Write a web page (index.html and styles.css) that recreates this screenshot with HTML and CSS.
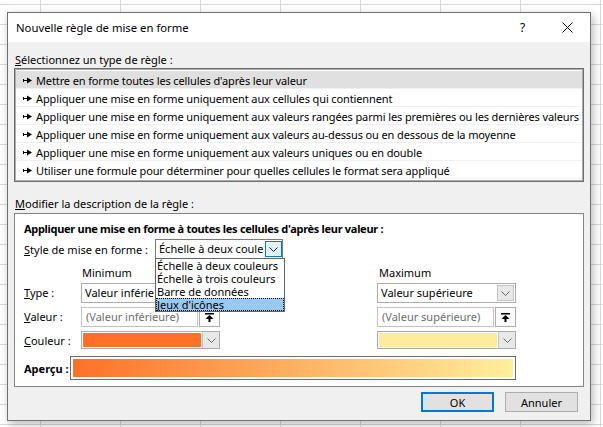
FILE: index.html
```html
<!DOCTYPE html>
<html lang="fr">
<head>
    <meta charset="UTF-8">
    <title>Nouvelle règle de mise en forme</title>
    <link rel="stylesheet" href="styles.css">
</head>
<body>
    <div class="dialog">
        <div class="titlebar">
            <span class="title">Nouvelle règle de mise en forme</span>
            <span class="title-btn">?</span>
            <span class="title-btn">
                <svg width="11" height="11" viewBox="0 0 11 11"><path d="M0.5 0.5 L10.5 10.5 M10.5 0.5 L0.5 10.5" stroke="#000" stroke-width="1"/></svg>
            </span>
        </div>

        <div class="body">
            <div class="section-label"><u>S</u>électionnez un type de règle :</div>
            <ul class="rule-list">
                <li class="selected"><svg class="arrow" width="9" height="7" viewBox="0 0 9 7"><rect x="0" y="2" width="1" height="3"/><rect x="0" y="3" width="5" height="1"/><polygon points="4,0.5 9,3.5 4,6.5"/></svg>Mettre en forme toutes les cellules d'après leur valeur</li>
                <li><svg class="arrow" width="9" height="7" viewBox="0 0 9 7"><rect x="0" y="2" width="1" height="3"/><rect x="0" y="3" width="5" height="1"/><polygon points="4,0.5 9,3.5 4,6.5"/></svg>Appliquer une mise en forme uniquement aux cellules qui contiennent</li>
                <li><svg class="arrow" width="9" height="7" viewBox="0 0 9 7"><rect x="0" y="2" width="1" height="3"/><rect x="0" y="3" width="5" height="1"/><polygon points="4,0.5 9,3.5 4,6.5"/></svg>Appliquer une mise en forme uniquement aux valeurs rangées parmi les premières ou les dernières valeurs</li>
                <li><svg class="arrow" width="9" height="7" viewBox="0 0 9 7"><rect x="0" y="2" width="1" height="3"/><rect x="0" y="3" width="5" height="1"/><polygon points="4,0.5 9,3.5 4,6.5"/></svg>Appliquer une mise en forme uniquement aux valeurs au-dessus ou en dessous de la moyenne</li>
                <li><svg class="arrow" width="9" height="7" viewBox="0 0 9 7"><rect x="0" y="2" width="1" height="3"/><rect x="0" y="3" width="5" height="1"/><polygon points="4,0.5 9,3.5 4,6.5"/></svg>Appliquer une mise en forme uniquement aux valeurs uniques ou en double</li>
                <li><svg class="arrow" width="9" height="7" viewBox="0 0 9 7"><rect x="0" y="2" width="1" height="3"/><rect x="0" y="3" width="5" height="1"/><polygon points="4,0.5 9,3.5 4,6.5"/></svg>Utiliser une formule pour déterminer pour quelles cellules le format sera appliqué</li>
            </ul>

            <div class="section-label second"><u>M</u>odifier la description de la règle :</div>
            <div class="desc">
                <div class="desc-title">Appliquer une mise en forme à toutes les cellules d'après leur valeur :</div>

                <div class="style-row">
                    <label><u>S</u>tyle de mise en forme :</label>
                    <div class="combo style-combo">
                        <span class="combo-text">Échelle à deux coule</span>
                        <span class="combo-btn"><svg width="9" height="5" viewBox="0 0 9 5"><polyline points="0.5,0.5 4.5,4.5 8.5,0.5" fill="none" stroke="#222" stroke-width="1"/></svg></span>
                        <div class="dropdown">
                            <div class="dd-item">Échelle à deux couleurs</div>
                            <div class="dd-item">Échelle à trois couleurs</div>
                            <div class="dd-item">Barre de données</div>
                            <div class="dd-item active">Jeux d'icônes</div>
                        </div>
                    </div>
                </div>

                <div class="limits">
                    <span></span>
                    <span class="col-head">Minimum</span>
                    <span></span>
                    <span class="col-head max">Maximum</span>

                    <label><u>T</u>ype :</label>
                    <div class="combo">
                        <span class="combo-text">Valeur inférie</span>
                        <span class="combo-btn"><svg width="9" height="5" viewBox="0 0 9 5"><polyline points="0.5,0.5 4.5,4.5 8.5,0.5" fill="none" stroke="#666" stroke-width="1"/></svg></span>
                    </div>
                    <span></span>
                    <div class="combo">
                        <span class="combo-text">Valeur supérieure</span>
                        <span class="combo-btn"><svg width="9" height="5" viewBox="0 0 9 5"><polyline points="0.5,0.5 4.5,4.5 8.5,0.5" fill="none" stroke="#666" stroke-width="1"/></svg></span>
                    </div>

                    <label><u>V</u>aleur :</label>
                    <div class="value-field">
                        <span class="value-input">(Valeur inférieure)</span>
                        <span class="ref-btn"><svg width="9" height="9" viewBox="0 0 9 9"><rect x="0" y="0" width="9" height="1.5"/><polygon points="4.5,2 0.5,6 8.5,6"/><rect x="3.5" y="5.5" width="2" height="3.5"/></svg></span>
                    </div>
                    <span></span>
                    <div class="value-field">
                        <span class="value-input">(Valeur supérieure)</span>
                        <span class="ref-btn"><svg width="9" height="9" viewBox="0 0 9 9"><rect x="0" y="0" width="9" height="1.5"/><polygon points="4.5,2 0.5,6 8.5,6"/><rect x="3.5" y="5.5" width="2" height="3.5"/></svg></span>
                    </div>

                    <label><u>C</u>ouleur :</label>
                    <div class="combo color-combo">
                        <span class="swatch min-color"></span>
                        <span class="combo-btn"><svg width="9" height="5" viewBox="0 0 9 5"><polyline points="0.5,0.5 4.5,4.5 8.5,0.5" fill="none" stroke="#666" stroke-width="1"/></svg></span>
                    </div>
                    <span></span>
                    <div class="combo color-combo">
                        <span class="swatch max-color"></span>
                        <span class="combo-btn"><svg width="9" height="5" viewBox="0 0 9 5"><polyline points="0.5,0.5 4.5,4.5 8.5,0.5" fill="none" stroke="#666" stroke-width="1"/></svg></span>
                    </div>
                </div>

                <div class="preview-row">
                    <span class="preview-label">Aperçu :</span>
                    <div class="preview"><div class="gradient"></div></div>
                </div>
            </div>

            <div class="buttons">
                <button type="button" class="ok">OK</button>
                <button type="button">Annuler</button>
            </div>
        </div>
    </div>
</body>
</html>
```

FILE: styles.css
```css
* {
    box-sizing: border-box;
}

html, body {
    margin: 0;
    height: 100%;
    overflow: hidden;
}

/* feuille Excel derriere la boite de dialogue */
body {
    font-family: "Noto Sans", "Segoe UI", sans-serif;
    font-size: 11px;
    color: #000;
    padding: 12px 0 0 7px;
    background-color: #fff;
    background-image:
        linear-gradient(to right, #d9d9d9 1px, transparent 1px),
        linear-gradient(to bottom, #d9d9d9 1px, transparent 1px);
    background-size: 80px 20px;
    background-position: 40px 4px;
}

.dialog {
    width: 584px;
    height: 409px;
    border: 1px solid #707070;
    background-color: #f0f0f0;
    box-shadow: 2px 3px 9px rgba(0,0,0,0.28);
    display: flex;
    flex-direction: column;
}

.titlebar {
    height: 29px;
    background-color: #fff;
    display: flex;
    align-items: center;
    padding-left: 8px;
    font-size: 11.3px;
}

.title {
    flex: 1;
}

.title-btn {
    width: 45px;
    display: flex;
    justify-content: center;
    align-items: center;
    font-size: 12px;
}

.body {
    flex: 1;
    padding: 10px 6px 0;
}

.section-label {
    line-height: 16px;
    padding-left: 1px;
}

.section-label.second {
    margin-top: 14px;
}

/* liste des types de regle */
.rule-list {
    list-style: none;
    margin: 0;
    padding: 2px 1px;
    border: 1px solid #6e6e6e;
    box-shadow: inset 0 0 0 1px #ababab;
    background-color: #fff;
    overflow: hidden;
}

.rule-list li {
    height: 18px;
    display: flex;
    align-items: center;
    padding-left: 7px;
    padding-top: 1px;
    border-bottom: 1px solid #f0f0f0;
    white-space: nowrap;
    letter-spacing: -0.12px;
}

.rule-list li.selected {
    background-color: #e0e0e0;
}

.rule-list .arrow {
    margin-right: 4px;
    flex-shrink: 0;
}

/* description de la regle */
.desc {
    margin-top: 1px;
    height: 174px;
    border: 1px solid #838383;
    background-color: #fff;
    padding: 7px 0 0 9px;
}

.desc-title {
    font-weight: bold;
    line-height: 16px;
    letter-spacing: -0.3px;
}

.style-row {
    display: flex;
    align-items: center;
    height: 20px;
    margin-top: 2px;
}

.style-row label {
    width: 131px;
}

.combo {
    display: flex;
    height: 20px;
    border: 1px solid #adadad;
    background-color: #fff;
}

.combo-text {
    flex: 1;
    padding-left: 3px;
    line-height: 18px;
    overflow: hidden;
    white-space: nowrap;
}

.combo-btn {
    width: 17px;
    margin: 1px;
    border: 1px solid #c4c4c4;
    background-color: #e8e8e8;
    display: flex;
    justify-content: center;
    align-items: center;
}

.style-combo {
    width: 128px;
    border-color: #7a7a7a;
    position: relative;
}

.style-combo .combo-btn {
    margin: 1px 0 1px 1px;
    border-color: #0078d7;
    background-color: #e5f1fb;
}

.dropdown {
    position: absolute;
    left: -1px;
    top: 18px;
    width: 130px;
    border: 1px solid #646464;
    background-color: #fff;
    z-index: 2;
}

.dd-item {
    height: 13px;
    line-height: 13px;
    padding-left: 1px;
    white-space: nowrap;
}

.dd-item.active {
    background-color: #99c9ef;
    outline: 1px dotted #000;
    outline-offset: -1px;
}

.limits {
    display: grid;
    grid-template-columns: 57px 139px 157px 139px;
    grid-template-rows: 18px 24px 24px 18px;
    margin-top: 6px;
    align-items: start;
}

.limits label {
    line-height: 20px;
}

.col-head {
    line-height: 16px;
    padding-left: 1px;
}

.col-head.max {
    padding-left: 2px;
}

.value-field {
    display: flex;
    height: 20px;
}

.value-input {
    flex: 1;
    border: 1px solid #c2c2c2;
    color: #6d6d6d;
    padding-left: 4px;
    line-height: 18px;
    white-space: nowrap;
}

.ref-btn {
    width: 21px;
    margin-left: 1px;
    border: 1px solid #adadad;
    background-color: #fbfbfb;
    display: flex;
    justify-content: center;
    align-items: center;
}

.color-combo {
    height: 18px;
}

.color-combo .combo-btn {
    margin: 0;
    border-width: 0 0 0 1px;
}

.swatch {
    flex: 1;
    margin: 1px;
}

.min-color {
    background-color: #ff7128;
}

.max-color {
    background-color: #ffeb9c;
}

.preview-row {
    display: flex;
    align-items: center;
    margin-top: 7px;
}

.preview-label {
    width: 46px;
    font-weight: bold;
}

.preview {
    width: 446px;
    height: 24px;
    border: 1px solid #6d6d6d;
    padding: 2px;
    background-color: #fff;
}

.gradient {
    height: 100%;
    background: linear-gradient(to right, #ff7128, #ffef9c);
}

.buttons {
    display: flex;
    justify-content: flex-end;
    gap: 11px;
    margin-top: 5px;
    padding-right: 6px;
}

button {
    width: 73px;
    height: 20px;
    padding: 0;
    border: 1px solid #adadad;
    background-color: #e1e1e1;
    font: inherit;
    color: #000;
}

button.ok {
    border: 2px solid #0078d7;
}
```
